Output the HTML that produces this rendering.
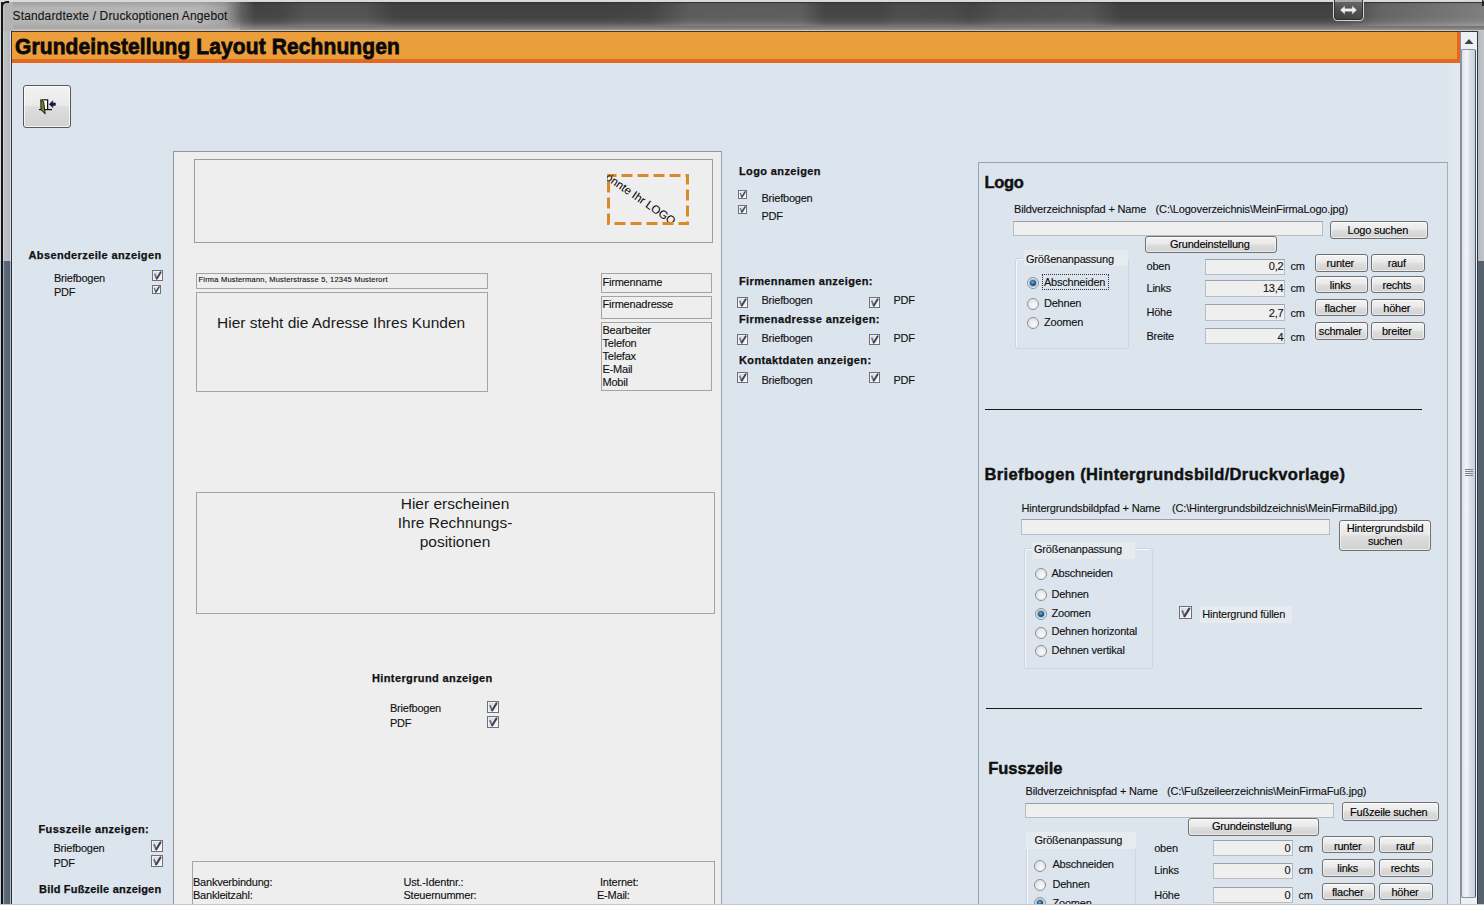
<!DOCTYPE html><html><head><meta charset="utf-8"><style>
html,body{margin:0;padding:0;}
body{width:1484px;height:905px;position:relative;overflow:hidden;background:#dce5ee;font-family:"Liberation Sans",sans-serif;color:#000;}
.t{position:absolute;white-space:nowrap;}
.r{position:absolute;box-sizing:border-box;}
.cb{position:absolute;box-sizing:border-box;border:1px solid #6e7276;background:linear-gradient(135deg,#d4d6da,#f8f8f8);box-shadow:inset 0 0 0 1px rgba(255,255,255,.6);}
.cb svg{position:absolute;left:-1px;top:-1px;}
.rd{position:absolute;width:12px;height:12px;box-sizing:border-box;border-radius:50%;border:1px solid #8e9095;background:radial-gradient(circle at 60% 65%,#fbfbfb,#d8d9dc);}
.rdot{position:absolute;left:2px;top:2px;width:6px;height:6px;border-radius:50%;background:radial-gradient(circle at 45% 40%,#6ab8e0 0,#1d5f94 45%,#0c3a66 80%);box-shadow:0 0 0 1px rgba(60,120,170,.45);}
.btn{position:absolute;box-sizing:border-box;border:1px solid #707070;border-radius:3px;background:linear-gradient(#f4f4f4 0%,#e9e9e9 45%,#dcdcdc 55%,#d2d2d2 100%);box-shadow:inset 0 0 0 1px rgba(255,255,255,.55);}
.inp{position:absolute;box-sizing:border-box;border:1px solid #b5bcc4;border-top-color:#9aa0a6;background:#efefef;}
</style></head><body>

<div class="r" style="left:0px;top:0px;width:1484px;height:31px;background:linear-gradient(#dcdcdc 0px,#d6d6d6 2px,#363636 2.5px,#404040 5px,#434343 17px,#505050 22px,#6e6e6e 26px,#8c8c8c 29.5px,#c8c8c8 30px,#c8c8c8 31px);"></div>
<div class="r" style="left:230px;top:3px;width:1254px;height:23px;background:linear-gradient(90deg,rgba(255,255,255,0) 5px,rgba(255,255,255,0.02) 50px,rgba(255,255,255,0.09) 75px,rgba(255,255,255,0.09) 135px,rgba(255,255,255,0) 165px,rgba(255,255,255,0) 370px,rgba(255,255,255,0.02) 420px,rgba(255,255,255,0.14) 460px,rgba(255,255,255,0.15) 570px,rgba(255,255,255,0.02) 595px,rgba(255,255,255,0.02) 650px,rgba(255,255,255,0.06) 670px,rgba(255,255,255,0.05) 720px,rgba(255,255,255,0.02) 740px,rgba(255,255,255,0.08) 770px,rgba(255,255,255,0.1) 860px,rgba(255,255,255,0) 890px,rgba(255,255,255,0) 1110px,rgba(255,255,255,0.18) 1150px,rgba(255,255,255,0.32) 1254px);"></div>
<div class="r" style="left:0px;top:2px;width:255px;height:28px;background:linear-gradient(90deg,#b4b4b4 0,#b6b6b6 200px,rgba(182,182,182,.8) 225px,rgba(160,160,160,.3) 242px,rgba(150,150,150,0) 255px);"></div>
<div class="r" style="left:0px;top:2px;width:240px;height:6px;background:linear-gradient(rgba(120,120,120,.35),rgba(150,150,150,0));"></div>
<div class="r" style="left:0px;top:22px;width:240px;height:8px;background:linear-gradient(rgba(160,160,160,0),rgba(150,150,150,.45) 70%,rgba(190,190,190,.6));"></div>
<div class="r" style="left:0px;top:0px;width:13px;height:31px;background:linear-gradient(90deg,#d8dadc 0,#d8dadc 1.5px,#151515 1.5px,#151515 3px,#c4c4c4 3px,#b4b4b4 5px,#b4b4b4 13px);"></div>
<div class="r" style="left:0px;top:0px;width:13px;height:2px;background:#dcdcdc;"></div>
<div class="r" style="left:1px;top:1px;width:8px;height:8px;border-left:2px solid #151515;border-top:2px solid #151515;border-radius:6px 0 0 0;"></div>
<div class="t" style="left:12.5px;top:8.64px;font-size:12px;line-height:15px;-webkit-text-stroke:0.12px currentColor;letter-spacing:0.15px;color:#141414;">Standardtexte / Druckoptionen Angebot</div>
<div class="r" style="left:1333px;top:-3px;width:31px;height:24px;border:1px solid #d4d4d4;border-radius:0 0 4px 4px;background:linear-gradient(rgba(150,150,150,.6),rgba(90,90,90,.5) 50%,rgba(60,60,60,.6));box-shadow:inset 0 0 0 1px rgba(40,40,40,.8);"></div>
<svg class="r" style="left:1339px;top:4px" width="19" height="12" viewBox="0 0 19 12"><path d="M1 6 L6 1.5 L6 4.3 L13 4.3 L13 1.5 L18 6 L13 10.5 L13 7.7 L6 7.7 L6 10.5 Z" fill="#eeeeee" stroke="#666" stroke-width=".6"/></svg>
<div class="r" style="left:0px;top:31px;width:13px;height:874px;background:linear-gradient(90deg,#d8dadc 0,#d8dadc 1.5px,#151515 1.5px,#151515 3px,#dadde0 3px,#bcbfc2 4.5px,#b4b8bc 10px,#dde2e6 10px,#dde2e6 11.3px,#2e3238 11.3px,#2e3238 12.2px,#e4eaf0 12.2px);"></div>
<div class="r" style="left:0px;top:261px;width:13px;height:643px;background:linear-gradient(90deg,#c8ccd0 0,#c8ccd0 1.5px,#0e141c 1.5px,#0e141c 3px,#c8d0d8 3px,#5d6b7a 4.3px,#55606e 10px,#b0bcc8 10.3px,#b0bcc8 11px,#202a36 11px,#202a36 12.2px,#e4eaf0 12.2px);"></div>
<div class="r" style="left:1477px;top:31px;width:7px;height:874px;background:linear-gradient(90deg,#b6babe 0,#c0c4c8 7px);"></div>
<div class="r" style="left:1477px;top:261px;width:7px;height:644px;background:linear-gradient(90deg,#6a7888 0,#56616e 2px,#56616e 7px);"></div>
<div class="r" style="left:1482px;top:0px;width:2px;height:6px;background:#222;border-radius:0 3px 0 0;"></div>
<div class="r" style="left:0px;top:904px;width:1484px;height:1px;background:#c6c6c6;"></div>
<div class="r" style="left:12px;top:31px;width:1448px;height:32px;background:linear-gradient(#4a3420 0px,#4a3420 0.8px,#ee9a3e 1px,#eb9f3c 4px,#e9a03b 24px,#ec9c3e 25px,#e59f38 28px,#e26a24 28.5px,#e5661e 31.5px,#f4e4d8 31.6px);"></div>
<div class="r" style="left:1457px;top:32px;width:3px;height:30px;background:#e5661e;"></div>
<div class="t" style="left:15px;top:33.9px;font-size:21px;line-height:26px;font-weight:bold;letter-spacing:0.1px;color:#0d0808;-webkit-text-stroke:0.7px #0d0808;transform:scaleY(1.08);transform-origin:0 20.3px;">Grundeinstellung Layout Rechnungen</div>
<div class="r" style="left:1448px;top:63px;width:12px;height:841px;background:linear-gradient(90deg,#dfe6ee,#e3e9f0);"></div>
<div class="r" style="left:1460px;top:31px;width:17px;height:873px;background:#eef0f3;"></div>
<div class="r" style="left:1460px;top:31px;width:18px;height:874px;border-left:1px solid #8a929c;border-right:1px solid #2e3640;border-top:1px solid #2e3640;"></div>
<svg class="r" style="left:1463px;top:37px" width="12" height="8" viewBox="0 0 12 8"><path d="M1.5 7 L6 2 L10.5 7 Z" fill="#3a4656"/></svg>
<div class="r" style="left:1461px;top:49px;width:15px;height:849px;border:1px solid #8a949e;border-right-color:#4a5460;border-radius:2px;background:linear-gradient(90deg,#dfe3ea 0,#f2f4f7 35%,#dde2e9 60%,#c6ced9 100%);"></div>
<svg class="r" style="left:1465px;top:469px" width="8" height="8" viewBox="0 0 8 8"><path d="M0 0.5H8M0 2.5H8M0 4.5H8M0 6.5H8" stroke="#7a8490" stroke-width="1"/></svg>
<div class="r" style="left:23px;top:85px;width:48px;height:43px;border:1px solid #55585c;border-radius:3px;background:linear-gradient(#f2f2f2 0%,#ebebeb 45%,#dddddd 52%,#d2d2d2 100%);box-shadow:inset 0 0 0 1px rgba(255,255,255,.75);"></div>
<svg class="r" style="left:36px;top:96px" width="22" height="20" viewBox="36 96 22 20">
<path d="M42 100 L47.6 100 L47.6 109.3" stroke="#111" stroke-width="1.3" fill="none"/>
<path d="M42.3 100.5 L47 100.5 L47 109 L44.5 109 Z" fill="#fbfbfb"/>
<path d="M39 109.6 L52 109.6" stroke="#111" stroke-width="1.2"/>
<path d="M40.8 99.6 L43.6 101.6 L45.2 113.8 L41 109.8 Z" fill="#76852f" stroke="#151a08" stroke-width="1"/>
<path d="M49.2 104.2 L52.8 100.8 L52.8 102.9 L55.4 102.9 L55.4 105.5 L52.8 105.5 L52.8 107.6 Z" fill="#1c1458" stroke="#120c40" stroke-width=".5"/>
</svg>
<div class="t" style="left:28.5px;top:247.89px;font-size:11px;line-height:14px;font-weight:bold;-webkit-text-stroke:0.25px currentColor;letter-spacing:0.38px;color:#111;">Absenderzeile anzeigen</div>
<div class="t" style="left:54px;top:270.69px;font-size:11px;line-height:14px;-webkit-text-stroke:0.12px currentColor;letter-spacing:-0.22px;color:#111;">Briefbogen</div>
<div class="t" style="left:54px;top:285.19px;font-size:11px;line-height:14px;-webkit-text-stroke:0.12px currentColor;letter-spacing:-0.22px;color:#111;">PDF</div>
<div class="cb" style="left:152px;top:270px;width:11px;height:11px;"><svg width="11" height="11" viewBox="0 0 10 10"><path d="M2.4 3.4 L4.3 7.9" stroke="#6a7080" stroke-width="1.5" fill="none"/><path d="M4.3 7.9 L7.9 2" stroke="#3c4352" stroke-width="1.7" fill="none" stroke-linecap="round"/></svg></div>
<div class="cb" style="left:152px;top:285px;width:9px;height:9px;"><svg width="9" height="9" viewBox="0 0 10 10"><path d="M2.4 3.4 L4.3 7.9" stroke="#6a7080" stroke-width="1.5" fill="none"/><path d="M4.3 7.9 L7.9 2" stroke="#3c4352" stroke-width="1.7" fill="none" stroke-linecap="round"/></svg></div>
<div class="t" style="left:38.5px;top:822.19px;font-size:11px;line-height:14px;font-weight:bold;-webkit-text-stroke:0.25px currentColor;letter-spacing:0.38px;color:#111;">Fusszeile anzeigen:</div>
<div class="t" style="left:53.5px;top:840.89px;font-size:11px;line-height:14px;-webkit-text-stroke:0.12px currentColor;letter-spacing:-0.22px;color:#111;">Briefbogen</div>
<div class="t" style="left:53.5px;top:855.89px;font-size:11px;line-height:14px;-webkit-text-stroke:0.12px currentColor;letter-spacing:-0.22px;color:#111;">PDF</div>
<div class="cb" style="left:151px;top:840px;width:12px;height:12px;"><svg width="12" height="12" viewBox="0 0 10 10"><path d="M2.4 3.4 L4.3 7.9" stroke="#6a7080" stroke-width="1.5" fill="none"/><path d="M4.3 7.9 L7.9 2" stroke="#3c4352" stroke-width="1.7" fill="none" stroke-linecap="round"/></svg></div>
<div class="cb" style="left:151px;top:855px;width:12px;height:12px;"><svg width="12" height="12" viewBox="0 0 10 10"><path d="M2.4 3.4 L4.3 7.9" stroke="#6a7080" stroke-width="1.5" fill="none"/><path d="M4.3 7.9 L7.9 2" stroke="#3c4352" stroke-width="1.7" fill="none" stroke-linecap="round"/></svg></div>
<div class="t" style="left:39px;top:881.69px;font-size:11px;line-height:14px;font-weight:bold;-webkit-text-stroke:0.25px currentColor;letter-spacing:0.2px;color:#111;">Bild Fußzeile anzeigen</div>
<div class="r" style="left:173px;top:151px;width:549px;height:754px;background:#eeeeee;border-left:1px solid #8f959b;border-top:1px solid #8f959b;border-right:1px solid #9aa4ae;"></div>
<div class="r" style="left:194px;top:159px;width:519px;height:84px;border:1px solid #9c9c9c;"></div>
<svg class="r" style="left:606px;top:173px" width="84" height="53" viewBox="0 0 84 53"><rect x="2.5" y="2.5" width="79" height="48" fill="none" stroke="#d9882a" stroke-width="3" stroke-dasharray="11 5" stroke-dashoffset="3"/></svg>
<div class="r" style="left:607px;top:175px;width:80px;height:47px;overflow:hidden;"><div class="t" style="left:-27.5px;top:-22.6px;font-size:11.5px;line-height:12px;transform:rotate(34.5deg);transform-origin:0 10px;color:#000;">Hier könnte Ihr LOGO stehen</div></div>
<div class="r" style="left:196px;top:273px;width:292px;height:16px;border:1px solid #a4a4a4;"></div>
<div class="t" style="left:198.5px;top:274.60px;font-size:7.5px;line-height:9px;-webkit-text-stroke:0.12px currentColor;letter-spacing:0.2px;color:#111;">Firma Mustermann, Musterstrasse 5, 12345 Musterort</div>
<div class="r" style="left:196px;top:292px;width:292px;height:100px;border:1px solid #a4a4a4;"></div>
<div class="t" style="left:217px;top:313.13px;font-size:15.5px;line-height:19px;color:#1a1a1a;">Hier steht die Adresse Ihres Kunden</div>
<div class="r" style="left:601px;top:273px;width:111px;height:20px;border:1px solid #a4a4a4;"></div>
<div class="t" style="left:602.5px;top:274.59px;font-size:11px;line-height:14px;-webkit-text-stroke:0.12px currentColor;letter-spacing:-0.22px;color:#111;">Firmenname</div>
<div class="r" style="left:601px;top:296px;width:111px;height:23px;border:1px solid #a4a4a4;"></div>
<div class="t" style="left:602.5px;top:297.19px;font-size:11px;line-height:14px;-webkit-text-stroke:0.12px currentColor;letter-spacing:-0.22px;color:#111;">Firmenadresse</div>
<div class="r" style="left:601px;top:322px;width:111px;height:69px;border:1px solid #a4a4a4;"></div>
<div class="t" style="left:602.5px;top:323.39px;font-size:11px;line-height:14px;-webkit-text-stroke:0.12px currentColor;letter-spacing:-0.22px;color:#111;">Bearbeiter</div>
<div class="t" style="left:602.5px;top:336.39px;font-size:11px;line-height:14px;-webkit-text-stroke:0.12px currentColor;letter-spacing:-0.22px;color:#111;">Telefon</div>
<div class="t" style="left:602.5px;top:349.39px;font-size:11px;line-height:14px;-webkit-text-stroke:0.12px currentColor;letter-spacing:-0.22px;color:#111;">Telefax</div>
<div class="t" style="left:602.5px;top:362.39px;font-size:11px;line-height:14px;-webkit-text-stroke:0.12px currentColor;letter-spacing:-0.22px;color:#111;">E-Mail</div>
<div class="t" style="left:602.5px;top:375.39px;font-size:11px;line-height:14px;-webkit-text-stroke:0.12px currentColor;letter-spacing:-0.22px;color:#111;">Mobil</div>
<div class="r" style="left:196px;top:492px;width:519px;height:122px;border:1px solid #a4a4a4;"></div>
<div class="t" style="left:305.0px;width:300px;text-align:center;top:494.13px;font-size:15.5px;line-height:19px;color:#1a1a1a;">Hier erscheinen</div>
<div class="t" style="left:305.0px;width:300px;text-align:center;top:513.03px;font-size:15.5px;line-height:19px;color:#1a1a1a;">Ihre Rechnungs-</div>
<div class="t" style="left:305.0px;width:300px;text-align:center;top:531.93px;font-size:15.5px;line-height:19px;color:#1a1a1a;">positionen</div>
<div class="t" style="left:372px;top:671.19px;font-size:11px;line-height:14px;font-weight:bold;-webkit-text-stroke:0.25px currentColor;letter-spacing:0.38px;color:#111;">Hintergrund anzeigen</div>
<div class="t" style="left:390px;top:700.69px;font-size:11px;line-height:14px;-webkit-text-stroke:0.12px currentColor;letter-spacing:-0.22px;color:#111;">Briefbogen</div>
<div class="t" style="left:390px;top:715.79px;font-size:11px;line-height:14px;-webkit-text-stroke:0.12px currentColor;letter-spacing:-0.22px;color:#111;">PDF</div>
<div class="cb" style="left:487px;top:701px;width:12px;height:12px;"><svg width="12" height="12" viewBox="0 0 10 10"><path d="M2.4 3.4 L4.3 7.9" stroke="#6a7080" stroke-width="1.5" fill="none"/><path d="M4.3 7.9 L7.9 2" stroke="#3c4352" stroke-width="1.7" fill="none" stroke-linecap="round"/></svg></div>
<div class="cb" style="left:487px;top:716px;width:12px;height:12px;"><svg width="12" height="12" viewBox="0 0 10 10"><path d="M2.4 3.4 L4.3 7.9" stroke="#6a7080" stroke-width="1.5" fill="none"/><path d="M4.3 7.9 L7.9 2" stroke="#3c4352" stroke-width="1.7" fill="none" stroke-linecap="round"/></svg></div>
<div class="r" style="left:192px;top:861px;width:523px;height:44px;border:1px solid #a4a4a4;border-bottom:none;"></div>
<div class="t" style="left:193px;top:875.19px;font-size:11px;line-height:14px;-webkit-text-stroke:0.12px currentColor;letter-spacing:-0.22px;color:#111;">Bankverbindung:</div>
<div class="t" style="left:193px;top:887.69px;font-size:11px;line-height:14px;-webkit-text-stroke:0.12px currentColor;letter-spacing:-0.22px;color:#111;">Bankleitzahl:</div>
<div class="t" style="left:403.5px;top:875.19px;font-size:11px;line-height:14px;-webkit-text-stroke:0.12px currentColor;letter-spacing:-0.22px;color:#111;">Ust.-Identnr.:</div>
<div class="t" style="left:403.5px;top:887.69px;font-size:11px;line-height:14px;-webkit-text-stroke:0.12px currentColor;letter-spacing:-0.22px;color:#111;">Steuernummer:</div>
<div class="t" style="left:600px;top:875.19px;font-size:11px;line-height:14px;-webkit-text-stroke:0.12px currentColor;letter-spacing:-0.22px;color:#111;">Internet:</div>
<div class="t" style="left:597px;top:887.69px;font-size:11px;line-height:14px;-webkit-text-stroke:0.12px currentColor;letter-spacing:-0.22px;color:#111;">E-Mail:</div>
<div class="t" style="left:739px;top:163.89px;font-size:11px;line-height:14px;font-weight:bold;-webkit-text-stroke:0.25px currentColor;letter-spacing:0.38px;color:#111;">Logo anzeigen</div>
<div class="cb" style="left:738px;top:190px;width:9px;height:9px;"><svg width="9" height="9" viewBox="0 0 10 10"><path d="M2.4 3.4 L4.3 7.9" stroke="#6a7080" stroke-width="1.5" fill="none"/><path d="M4.3 7.9 L7.9 2" stroke="#3c4352" stroke-width="1.7" fill="none" stroke-linecap="round"/></svg></div>
<div class="cb" style="left:738px;top:205px;width:9px;height:9px;"><svg width="9" height="9" viewBox="0 0 10 10"><path d="M2.4 3.4 L4.3 7.9" stroke="#6a7080" stroke-width="1.5" fill="none"/><path d="M4.3 7.9 L7.9 2" stroke="#3c4352" stroke-width="1.7" fill="none" stroke-linecap="round"/></svg></div>
<div class="t" style="left:761.5px;top:190.59px;font-size:11px;line-height:14px;-webkit-text-stroke:0.12px currentColor;letter-spacing:-0.22px;color:#111;">Briefbogen</div>
<div class="t" style="left:761.5px;top:209.49px;font-size:11px;line-height:14px;-webkit-text-stroke:0.12px currentColor;letter-spacing:-0.22px;color:#111;">PDF</div>
<div class="t" style="left:739px;top:273.99px;font-size:11px;line-height:14px;font-weight:bold;-webkit-text-stroke:0.25px currentColor;letter-spacing:0.38px;color:#111;">Firmennamen anzeigen:</div>
<div class="cb" style="left:737px;top:296.5px;width:11px;height:11px;"><svg width="11" height="11" viewBox="0 0 10 10"><path d="M2.4 3.4 L4.3 7.9" stroke="#6a7080" stroke-width="1.5" fill="none"/><path d="M4.3 7.9 L7.9 2" stroke="#3c4352" stroke-width="1.7" fill="none" stroke-linecap="round"/></svg></div>
<div class="cb" style="left:869px;top:296.5px;width:11px;height:11px;"><svg width="11" height="11" viewBox="0 0 10 10"><path d="M2.4 3.4 L4.3 7.9" stroke="#6a7080" stroke-width="1.5" fill="none"/><path d="M4.3 7.9 L7.9 2" stroke="#3c4352" stroke-width="1.7" fill="none" stroke-linecap="round"/></svg></div>
<div class="t" style="left:761.5px;top:293.09px;font-size:11px;line-height:14px;-webkit-text-stroke:0.12px currentColor;letter-spacing:-0.22px;color:#111;">Briefbogen</div>
<div class="t" style="left:893.5px;top:293.09px;font-size:11px;line-height:14px;-webkit-text-stroke:0.12px currentColor;letter-spacing:-0.22px;color:#111;">PDF</div>
<div class="t" style="left:739px;top:311.79px;font-size:11px;line-height:14px;font-weight:bold;-webkit-text-stroke:0.25px currentColor;letter-spacing:0.38px;color:#111;">Firmenadresse anzeigen:</div>
<div class="cb" style="left:737px;top:333.5px;width:11px;height:11px;"><svg width="11" height="11" viewBox="0 0 10 10"><path d="M2.4 3.4 L4.3 7.9" stroke="#6a7080" stroke-width="1.5" fill="none"/><path d="M4.3 7.9 L7.9 2" stroke="#3c4352" stroke-width="1.7" fill="none" stroke-linecap="round"/></svg></div>
<div class="cb" style="left:869px;top:333.5px;width:11px;height:11px;"><svg width="11" height="11" viewBox="0 0 10 10"><path d="M2.4 3.4 L4.3 7.9" stroke="#6a7080" stroke-width="1.5" fill="none"/><path d="M4.3 7.9 L7.9 2" stroke="#3c4352" stroke-width="1.7" fill="none" stroke-linecap="round"/></svg></div>
<div class="t" style="left:761.5px;top:331.19px;font-size:11px;line-height:14px;-webkit-text-stroke:0.12px currentColor;letter-spacing:-0.22px;color:#111;">Briefbogen</div>
<div class="t" style="left:893.5px;top:331.19px;font-size:11px;line-height:14px;-webkit-text-stroke:0.12px currentColor;letter-spacing:-0.22px;color:#111;">PDF</div>
<div class="t" style="left:739px;top:352.69px;font-size:11px;line-height:14px;font-weight:bold;-webkit-text-stroke:0.25px currentColor;letter-spacing:0.38px;color:#111;">Kontaktdaten anzeigen:</div>
<div class="cb" style="left:737px;top:372px;width:11px;height:11px;"><svg width="11" height="11" viewBox="0 0 10 10"><path d="M2.4 3.4 L4.3 7.9" stroke="#6a7080" stroke-width="1.5" fill="none"/><path d="M4.3 7.9 L7.9 2" stroke="#3c4352" stroke-width="1.7" fill="none" stroke-linecap="round"/></svg></div>
<div class="cb" style="left:869px;top:372px;width:11px;height:11px;"><svg width="11" height="11" viewBox="0 0 10 10"><path d="M2.4 3.4 L4.3 7.9" stroke="#6a7080" stroke-width="1.5" fill="none"/><path d="M4.3 7.9 L7.9 2" stroke="#3c4352" stroke-width="1.7" fill="none" stroke-linecap="round"/></svg></div>
<div class="t" style="left:761.5px;top:372.59px;font-size:11px;line-height:14px;-webkit-text-stroke:0.12px currentColor;letter-spacing:-0.22px;color:#111;">Briefbogen</div>
<div class="t" style="left:893.5px;top:372.59px;font-size:11px;line-height:14px;-webkit-text-stroke:0.12px currentColor;letter-spacing:-0.22px;color:#111;">PDF</div>
<div class="r" style="left:978px;top:162px;width:470px;height:743px;border-left:1px solid #9aa2aa;border-top:1px solid #9aa2aa;border-right:1px solid #a6aeb6;"></div>
<div class="t" style="left:984.5px;top:172.08px;font-size:16.5px;line-height:21px;font-weight:bold;-webkit-text-stroke:0.45px currentColor;letter-spacing:-0.3px;color:#111;">Logo</div>
<div class="t" style="left:1014px;top:202.19px;font-size:11px;line-height:14px;-webkit-text-stroke:0.12px currentColor;letter-spacing:-0.17px;color:#111;">Bildverzeichnispfad + Name</div>
<div class="t" style="left:1155.6px;top:202.19px;font-size:11px;line-height:14px;-webkit-text-stroke:0.12px currentColor;letter-spacing:-0.15px;color:#111;">(C:\Logoverzeichnis\MeinFirmaLogo.jpg)</div>
<div class="inp" style="left:1013px;top:220.5px;width:310px;height:15.5px;"></div>
<div class="btn" style="left:1330px;top:220.5px;width:98px;height:18.5px;"></div>
<div class="t" style="left:1318.8px;width:118px;text-align:center;top:223.19px;font-size:11px;line-height:14px;-webkit-text-stroke:0.12px currentColor;letter-spacing:-0.22px;">Logo suchen</div>
<div class="btn" style="left:1145px;top:235.5px;width:132px;height:17.5px;"></div>
<div class="t" style="left:1133.8px;width:152px;text-align:center;top:236.59px;font-size:11px;line-height:14px;-webkit-text-stroke:0.12px currentColor;letter-spacing:-0.22px;">Grundeinstellung</div>
<div class="r" style="left:1015px;top:258px;width:114px;height:91px;border:1px solid #cdd6de;border-radius:3px;box-shadow:inset 1px 1px 0 rgba(255,255,255,.7);"></div>
<div class="r" style="left:1024px;top:250px;width:104px;height:16px;background:#e6ebf0;"></div>
<div class="t" style="left:1026px;top:251.69px;font-size:11px;line-height:14px;-webkit-text-stroke:0.12px currentColor;letter-spacing:-0.22px;color:#111;">Größenanpassung</div>
<div class="rd" style="left:1026.6px;top:276.7px;"><div class="rdot"></div></div>
<div class="t" style="left:1044px;top:274.89px;font-size:11px;line-height:14px;-webkit-text-stroke:0.12px currentColor;letter-spacing:-0.22px;color:#111;">Abschneiden</div>
<div class="r" style="left:1042px;top:274px;width:67px;height:16px;border:1px dotted #333;"></div>
<div class="rd" style="left:1026.6px;top:297.6px;"></div>
<div class="t" style="left:1044px;top:296.49px;font-size:11px;line-height:14px;-webkit-text-stroke:0.12px currentColor;letter-spacing:-0.22px;color:#111;">Dehnen</div>
<div class="rd" style="left:1026.6px;top:316.9px;"></div>
<div class="t" style="left:1044px;top:315.49px;font-size:11px;line-height:14px;-webkit-text-stroke:0.12px currentColor;letter-spacing:-0.22px;color:#111;">Zoomen</div>
<div class="t" style="left:1146.5px;top:258.69px;font-size:11px;line-height:14px;-webkit-text-stroke:0.12px currentColor;letter-spacing:-0.22px;color:#111;">oben</div>
<div class="inp" style="left:1205px;top:258.5px;width:80px;height:16.5px;"></div>
<div class="t" style="left:1223.5px;width:60px;text-align:right;top:259.39px;font-size:11px;line-height:14px;-webkit-text-stroke:0.12px currentColor;letter-spacing:-0.22px;color:#111;">0,2</div>
<div class="t" style="left:1290.5px;top:259.39px;font-size:11px;line-height:14px;-webkit-text-stroke:0.12px currentColor;letter-spacing:-0.22px;color:#111;">cm</div>
<div class="t" style="left:1146.5px;top:280.69px;font-size:11px;line-height:14px;-webkit-text-stroke:0.12px currentColor;letter-spacing:-0.22px;color:#111;">Links</div>
<div class="inp" style="left:1205px;top:280.3px;width:80px;height:16.30000000000001px;"></div>
<div class="t" style="left:1223.5px;width:60px;text-align:right;top:281.39px;font-size:11px;line-height:14px;-webkit-text-stroke:0.12px currentColor;letter-spacing:-0.22px;color:#111;">13,4</div>
<div class="t" style="left:1290.5px;top:281.39px;font-size:11px;line-height:14px;-webkit-text-stroke:0.12px currentColor;letter-spacing:-0.22px;color:#111;">cm</div>
<div class="t" style="left:1146.5px;top:305.09px;font-size:11px;line-height:14px;-webkit-text-stroke:0.12px currentColor;letter-spacing:-0.22px;color:#111;">Höhe</div>
<div class="inp" style="left:1205px;top:304px;width:80px;height:16.5px;"></div>
<div class="t" style="left:1223.5px;width:60px;text-align:right;top:305.79px;font-size:11px;line-height:14px;-webkit-text-stroke:0.12px currentColor;letter-spacing:-0.22px;color:#111;">2,7</div>
<div class="t" style="left:1290.5px;top:305.79px;font-size:11px;line-height:14px;-webkit-text-stroke:0.12px currentColor;letter-spacing:-0.22px;color:#111;">cm</div>
<div class="t" style="left:1146.5px;top:328.99px;font-size:11px;line-height:14px;-webkit-text-stroke:0.12px currentColor;letter-spacing:-0.22px;color:#111;">Breite</div>
<div class="inp" style="left:1205px;top:328.3px;width:80px;height:16.19999999999999px;"></div>
<div class="t" style="left:1223.5px;width:60px;text-align:right;top:329.69px;font-size:11px;line-height:14px;-webkit-text-stroke:0.12px currentColor;letter-spacing:-0.22px;color:#111;">4</div>
<div class="t" style="left:1290.5px;top:329.69px;font-size:11px;line-height:14px;-webkit-text-stroke:0.12px currentColor;letter-spacing:-0.22px;color:#111;">cm</div>
<div class="btn" style="left:1315px;top:254.4px;width:53px;height:17.200000000000017px;"></div>
<div class="t" style="left:1303.8px;width:73px;text-align:center;top:256.49px;font-size:11px;line-height:14px;-webkit-text-stroke:0.12px currentColor;letter-spacing:-0.22px;">runter</div>
<div class="btn" style="left:1371px;top:254.4px;width:54px;height:17.200000000000017px;"></div>
<div class="t" style="left:1359.8px;width:74px;text-align:center;top:256.49px;font-size:11px;line-height:14px;-webkit-text-stroke:0.12px currentColor;letter-spacing:-0.22px;">rauf</div>
<div class="btn" style="left:1315px;top:276.2px;width:53px;height:17.19999999999999px;"></div>
<div class="t" style="left:1303.8px;width:73px;text-align:center;top:278.19px;font-size:11px;line-height:14px;-webkit-text-stroke:0.12px currentColor;letter-spacing:-0.22px;">links</div>
<div class="btn" style="left:1371px;top:276.2px;width:54px;height:17.19999999999999px;"></div>
<div class="t" style="left:1359.8px;width:74px;text-align:center;top:278.19px;font-size:11px;line-height:14px;-webkit-text-stroke:0.12px currentColor;letter-spacing:-0.22px;">rechts</div>
<div class="btn" style="left:1315px;top:299.4px;width:53px;height:17.0px;"></div>
<div class="t" style="left:1303.8px;width:73px;text-align:center;top:300.99px;font-size:11px;line-height:14px;-webkit-text-stroke:0.12px currentColor;letter-spacing:-0.22px;">flacher</div>
<div class="btn" style="left:1371px;top:299.4px;width:54px;height:17.0px;"></div>
<div class="t" style="left:1359.8px;width:74px;text-align:center;top:300.99px;font-size:11px;line-height:14px;-webkit-text-stroke:0.12px currentColor;letter-spacing:-0.22px;">höher</div>
<div class="btn" style="left:1315px;top:322.3px;width:53px;height:17.30000000000001px;"></div>
<div class="t" style="left:1303.8px;width:73px;text-align:center;top:323.79px;font-size:11px;line-height:14px;-webkit-text-stroke:0.12px currentColor;letter-spacing:-0.22px;">schmaler</div>
<div class="btn" style="left:1371px;top:322.3px;width:54px;height:17.30000000000001px;"></div>
<div class="t" style="left:1359.8px;width:74px;text-align:center;top:323.79px;font-size:11px;line-height:14px;-webkit-text-stroke:0.12px currentColor;letter-spacing:-0.22px;">breiter</div>
<div class="r" style="left:985px;top:409px;width:437px;height:1px;background:#1a1a1a;"></div>
<div class="t" style="left:984.5px;top:463.58px;font-size:16.5px;line-height:21px;font-weight:bold;-webkit-text-stroke:0.45px currentColor;letter-spacing:0.36px;color:#111;">Briefbogen (Hintergrundsbild/Druckvorlage)</div>
<div class="t" style="left:1021.5px;top:500.79px;font-size:11px;line-height:14px;-webkit-text-stroke:0.12px currentColor;letter-spacing:-0.17px;color:#111;">Hintergrundsbildpfad + Name</div>
<div class="t" style="left:1172px;top:500.79px;font-size:11px;line-height:14px;-webkit-text-stroke:0.12px currentColor;letter-spacing:-0.15px;color:#111;">(C:\Hintergrundsbildzeichnis\MeinFirmaBild.jpg)</div>
<div class="inp" style="left:1020.5px;top:518.5px;width:309.5px;height:16.5px;"></div>
<div class="btn" style="left:1339px;top:519.5px;width:92px;height:31.0px;"></div>
<div class="t" style="left:1339.0px;width:92px;text-align:center;top:521.39px;font-size:11px;line-height:14px;-webkit-text-stroke:0.12px currentColor;letter-spacing:-0.22px;">Hintergrundsbild</div>
<div class="t" style="left:1339.0px;width:92px;text-align:center;top:534.39px;font-size:11px;line-height:14px;-webkit-text-stroke:0.12px currentColor;letter-spacing:-0.22px;">suchen</div>
<div class="r" style="left:1024px;top:548px;width:129px;height:120.5px;border:1px solid #cdd6de;border-radius:3px;box-shadow:inset 1px 1px 0 rgba(255,255,255,.7);"></div>
<div class="r" style="left:1032px;top:541.5px;width:103px;height:17.0px;background:#e6ebf0;"></div>
<div class="t" style="left:1034px;top:541.89px;font-size:11px;line-height:14px;-webkit-text-stroke:0.12px currentColor;letter-spacing:-0.22px;color:#111;">Größenanpassung</div>
<div class="rd" style="left:1035px;top:568px;"></div>
<div class="t" style="left:1051.5px;top:565.89px;font-size:11px;line-height:14px;-webkit-text-stroke:0.12px currentColor;letter-spacing:-0.22px;color:#111;">Abschneiden</div>
<div class="rd" style="left:1035px;top:588.9px;"></div>
<div class="t" style="left:1051.5px;top:587.19px;font-size:11px;line-height:14px;-webkit-text-stroke:0.12px currentColor;letter-spacing:-0.22px;color:#111;">Dehnen</div>
<div class="rd" style="left:1035px;top:607.7px;"><div class="rdot"></div></div>
<div class="t" style="left:1051.5px;top:605.99px;font-size:11px;line-height:14px;-webkit-text-stroke:0.12px currentColor;letter-spacing:-0.22px;color:#111;">Zoomen</div>
<div class="rd" style="left:1035px;top:626.5px;"></div>
<div class="t" style="left:1051.5px;top:623.79px;font-size:11px;line-height:14px;-webkit-text-stroke:0.12px currentColor;letter-spacing:-0.22px;color:#111;">Dehnen horizontal</div>
<div class="rd" style="left:1035px;top:645.4px;"></div>
<div class="t" style="left:1051.5px;top:642.99px;font-size:11px;line-height:14px;-webkit-text-stroke:0.12px currentColor;letter-spacing:-0.22px;color:#111;">Dehnen vertikal</div>
<div class="cb" style="left:1179px;top:606px;width:13px;height:13px;"><svg width="13" height="13" viewBox="0 0 10 10"><path d="M2.4 3.4 L4.3 7.9" stroke="#6a7080" stroke-width="1.5" fill="none"/><path d="M4.3 7.9 L7.9 2" stroke="#3c4352" stroke-width="1.7" fill="none" stroke-linecap="round"/></svg></div>
<div class="r" style="left:1200px;top:606px;width:92px;height:17px;background:#e6ebf0;"></div>
<div class="t" style="left:1202.3px;top:606.99px;font-size:11px;line-height:14px;-webkit-text-stroke:0.12px currentColor;letter-spacing:-0.22px;color:#111;">Hintergrund füllen</div>
<div class="r" style="left:986px;top:708px;width:436px;height:1px;background:#1a1a1a;"></div>
<div class="t" style="left:988.2px;top:757.98px;font-size:16.5px;line-height:21px;font-weight:bold;-webkit-text-stroke:0.45px currentColor;color:#111;">Fusszeile</div>
<div class="t" style="left:1025.5px;top:784.19px;font-size:11px;line-height:14px;-webkit-text-stroke:0.12px currentColor;letter-spacing:-0.17px;color:#111;">Bildverzeichnispfad + Name</div>
<div class="t" style="left:1167px;top:784.19px;font-size:11px;line-height:14px;-webkit-text-stroke:0.12px currentColor;letter-spacing:-0.15px;color:#111;">(C:\Fußzeileerzeichnis\MeinFirmaFuß.jpg)</div>
<div class="inp" style="left:1024.5px;top:803px;width:309.0px;height:14.5px;"></div>
<div class="btn" style="left:1341.5px;top:802.3px;width:97.0px;height:19.200000000000045px;"></div>
<div class="t" style="left:1330.3px;width:117.0px;text-align:center;top:805.29px;font-size:11px;line-height:14px;-webkit-text-stroke:0.12px currentColor;letter-spacing:-0.22px;">Fußzeile suchen</div>
<div class="btn" style="left:1187.5px;top:818px;width:131.0px;height:17.5px;"></div>
<div class="t" style="left:1176.3px;width:151.0px;text-align:center;top:819.49px;font-size:11px;line-height:14px;-webkit-text-stroke:0.12px currentColor;letter-spacing:-0.22px;">Grundeinstellung</div>
<div class="r" style="left:1026px;top:840px;width:110px;height:80px;border:1px solid #cdd6de;border-radius:3px;box-shadow:inset 1px 1px 0 rgba(255,255,255,.7);"></div>
<div class="r" style="left:1026px;top:832px;width:110px;height:17px;background:#e6ebf0;"></div>
<div class="t" style="left:1034.4px;top:833.39px;font-size:11px;line-height:14px;-webkit-text-stroke:0.12px currentColor;letter-spacing:-0.22px;color:#111;">Größenanpassung</div>
<div class="rd" style="left:1034.3px;top:859.7px;"></div>
<div class="t" style="left:1052.5px;top:857.49px;font-size:11px;line-height:14px;-webkit-text-stroke:0.12px currentColor;letter-spacing:-0.22px;color:#111;">Abschneiden</div>
<div class="rd" style="left:1034.3px;top:878.8px;"></div>
<div class="t" style="left:1052.5px;top:876.69px;font-size:11px;line-height:14px;-webkit-text-stroke:0.12px currentColor;letter-spacing:-0.22px;color:#111;">Dehnen</div>
<div class="rd" style="left:1034.3px;top:897px;"><div class="rdot"></div></div>
<div class="t" style="left:1052.5px;top:895.69px;font-size:11px;line-height:14px;-webkit-text-stroke:0.12px currentColor;letter-spacing:-0.22px;color:#111;">Zoomen</div>
<div class="t" style="left:1154.2px;top:840.99px;font-size:11px;line-height:14px;-webkit-text-stroke:0.12px currentColor;letter-spacing:-0.22px;color:#111;">oben</div>
<div class="inp" style="left:1213.3px;top:840.2px;width:79.29999999999995px;height:15.899999999999977px;"></div>
<div class="t" style="left:1250.3px;width:40px;text-align:right;top:840.99px;font-size:11px;line-height:14px;-webkit-text-stroke:0.12px currentColor;letter-spacing:-0.22px;color:#111;">0</div>
<div class="t" style="left:1298.5px;top:840.99px;font-size:11px;line-height:14px;-webkit-text-stroke:0.12px currentColor;letter-spacing:-0.22px;color:#111;">cm</div>
<div class="t" style="left:1154.2px;top:863.39px;font-size:11px;line-height:14px;-webkit-text-stroke:0.12px currentColor;letter-spacing:-0.22px;color:#111;">Links</div>
<div class="inp" style="left:1213.3px;top:863.3px;width:79.29999999999995px;height:15.900000000000091px;"></div>
<div class="t" style="left:1250.3px;width:40px;text-align:right;top:863.39px;font-size:11px;line-height:14px;-webkit-text-stroke:0.12px currentColor;letter-spacing:-0.22px;color:#111;">0</div>
<div class="t" style="left:1298.5px;top:863.39px;font-size:11px;line-height:14px;-webkit-text-stroke:0.12px currentColor;letter-spacing:-0.22px;color:#111;">cm</div>
<div class="t" style="left:1154.2px;top:887.89px;font-size:11px;line-height:14px;-webkit-text-stroke:0.12px currentColor;letter-spacing:-0.22px;color:#111;">Höhe</div>
<div class="inp" style="left:1213.3px;top:887.1px;width:79.29999999999995px;height:15.899999999999977px;"></div>
<div class="t" style="left:1250.3px;width:40px;text-align:right;top:887.89px;font-size:11px;line-height:14px;-webkit-text-stroke:0.12px currentColor;letter-spacing:-0.22px;color:#111;">0</div>
<div class="t" style="left:1298.5px;top:887.89px;font-size:11px;line-height:14px;-webkit-text-stroke:0.12px currentColor;letter-spacing:-0.22px;color:#111;">cm</div>
<div class="btn" style="left:1322.3px;top:836.3px;width:53.200000000000045px;height:17.100000000000023px;"></div>
<div class="t" style="left:1311.1px;width:73.20000000000005px;text-align:center;top:838.69px;font-size:11px;line-height:14px;-webkit-text-stroke:0.12px currentColor;letter-spacing:-0.22px;">runter</div>
<div class="btn" style="left:1379.4px;top:836.3px;width:53.59999999999991px;height:17.100000000000023px;"></div>
<div class="t" style="left:1368.2px;width:73.59999999999991px;text-align:center;top:838.69px;font-size:11px;line-height:14px;-webkit-text-stroke:0.12px currentColor;letter-spacing:-0.22px;">rauf</div>
<div class="btn" style="left:1322.3px;top:859.4px;width:53.200000000000045px;height:17.200000000000045px;"></div>
<div class="t" style="left:1311.1px;width:73.20000000000005px;text-align:center;top:861.49px;font-size:11px;line-height:14px;-webkit-text-stroke:0.12px currentColor;letter-spacing:-0.22px;">links</div>
<div class="btn" style="left:1379.4px;top:859.4px;width:53.59999999999991px;height:17.200000000000045px;"></div>
<div class="t" style="left:1368.2px;width:73.59999999999991px;text-align:center;top:861.49px;font-size:11px;line-height:14px;-webkit-text-stroke:0.12px currentColor;letter-spacing:-0.22px;">rechts</div>
<div class="btn" style="left:1322.3px;top:882.5px;width:53.200000000000045px;height:17.200000000000045px;"></div>
<div class="t" style="left:1311.1px;width:73.20000000000005px;text-align:center;top:884.59px;font-size:11px;line-height:14px;-webkit-text-stroke:0.12px currentColor;letter-spacing:-0.22px;">flacher</div>
<div class="btn" style="left:1379.4px;top:882.5px;width:53.59999999999991px;height:17.200000000000045px;"></div>
<div class="t" style="left:1368.2px;width:73.59999999999991px;text-align:center;top:884.59px;font-size:11px;line-height:14px;-webkit-text-stroke:0.12px currentColor;letter-spacing:-0.22px;">höher</div>
<div class="r" style="left:0px;top:904px;width:1484px;height:1px;background:#c6c6c6;"></div>
</body></html>
